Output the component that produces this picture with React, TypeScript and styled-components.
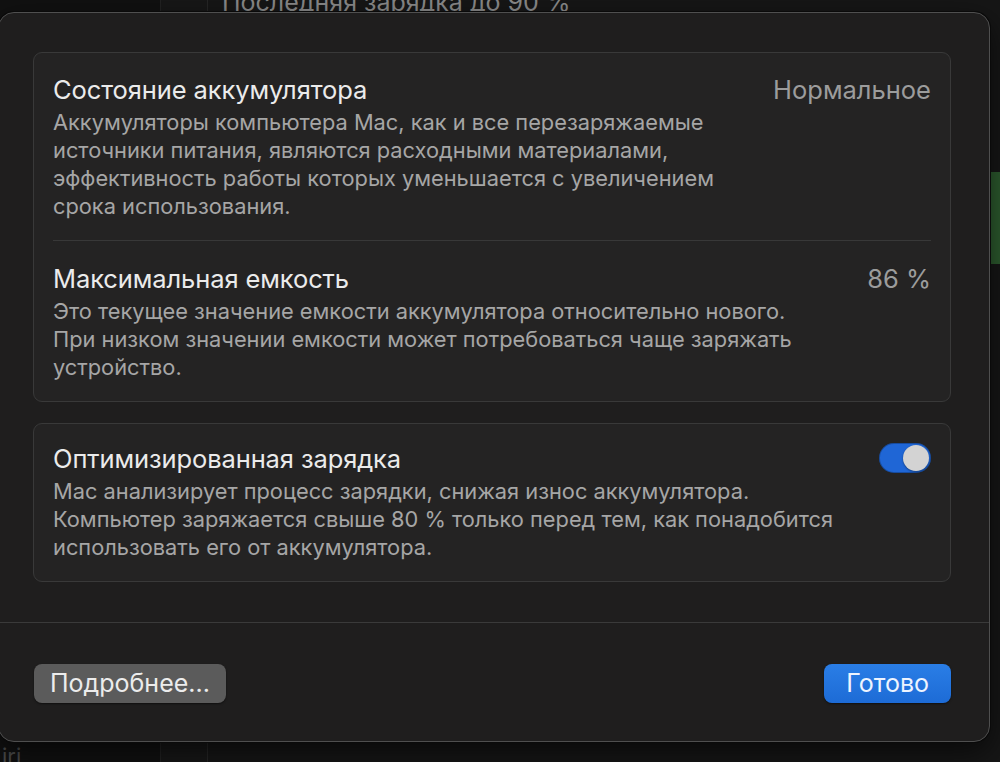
import React from 'react';
import styled, { createGlobalStyle } from 'styled-components';

const GlobalStyle = createGlobalStyle`
    html, body {
        margin: 0;
        padding: 0;
        background: #151515;
        font-family: Inter, "Noto Sans", sans-serif;
        -webkit-font-smoothing: antialiased;
    }
    #root {
        width: 1000px;
        height: 762px;
        overflow: hidden;
        position: relative;
    }
`;

const Backdrop = styled.div`
    display: flex;
    width: 1000px;
    height: 762px;
    background: #161616;
`;

const BackSidebar = styled.div`
    width: 160px;
    background: #111111;
    display: flex;
    flex-direction: column;
    justify-content: flex-end;
    padding: 0 0 0 2px;
    box-sizing: border-box;
`;

const BackSideLabel = styled.div`
    color: #4a4a4a;
    font-size: 22px;
    line-height: 20px;
    margin-bottom: -4px;
`;

const BackGutter = styled.div`
    width: 46px;
    background: #171717;
    border-left: 1px solid #222;
    border-right: 1px solid #262626;
`;

const BackContent = styled.div`
    flex: 1;
    display: flex;
    flex-direction: column;
    padding-left: 14px;
`;

const BackText = styled.div`
    color: #8a8a8a;
    font-size: 25px;
    line-height: 24px;
    margin-top: -10px;
    white-space: nowrap;
`;

const BackRightStripe = styled.div`
    margin-left: auto;
    margin-top: 158px;
    width: 10px;
    height: 92px;
    background: #2c5a2e;
`;

const Sheet = styled.div`
    position: absolute;
    left: -2px;
    top: 12px;
    width: 992px;
    height: 730px;
    box-sizing: border-box;
    background: #1f1e1e;
    border: 1px solid #4f4f4f;
    border-radius: 16px;
    box-shadow: 0 0 0 1px #0a0a0a, 0 10px 30px rgba(0, 0, 0, 0.6);
    display: flex;
    flex-direction: column;
`;

const SheetBody = styled.div`
    display: flex;
    flex-direction: column;
    gap: 21px;
    padding: 39px 38px 0 34px;
    height: 609px;
    box-sizing: border-box;
`;

const Card = styled.div`
    background: #242323;
    border: 1px solid #393939;
    border-radius: 9px;
    padding: 0 19px;
    display: flex;
    flex-direction: column;
`;

const Row = styled.div<{ $pt: number; $pb: number }>`
    display: flex;
    align-items: flex-start;
    gap: 20px;
    padding: ${p => p.$pt}px 0 ${p => p.$pb}px;
`;

const Separator = styled.div`
    height: 1px;
    background: #383838;
`;

const RowText = styled.div`
    flex: 1;
    display: flex;
    flex-direction: column;
    gap: 3px;
`;

const Title = styled.div`
    color: #ebebeb;
    font-size: 25.5px;
    line-height: 30px;
    letter-spacing: -0.1px;
    white-space: nowrap;
`;

const Description = styled.div`
    color: #a6a6a6;
    font-size: 21.8px;
    line-height: 28px;
    white-space: nowrap;
`;

const Value = styled.div`
    color: #9c9c9c;
    font-size: 25.5px;
    line-height: 30px;
    white-space: nowrap;
`;

const Toggle = styled.div<{ $on: boolean }>`
    width: 52px;
    height: 30px;
    border-radius: 15px;
    background: ${p => (p.$on ? '#1f66d6' : '#4a4a4a')};
    display: flex;
    align-items: center;
    justify-content: ${p => (p.$on ? 'flex-end' : 'flex-start')};
    padding: 0 2px;
    box-sizing: border-box;
    margin-top: -1px;
    box-shadow: inset 0 0 0 1px rgba(0, 0, 0, 0.25);
`;

const Knob = styled.div`
    width: 26px;
    height: 26px;
    border-radius: 50%;
    background: #d3d3d3;
    box-shadow: 0 1px 2px rgba(0, 0, 0, 0.4);
`;

const Divider = styled.div`
    height: 1px;
    background: #3a3a3a;
`;

const Footer = styled.div`
    flex: 1;
    display: flex;
    align-items: center;
    justify-content: space-between;
    padding: 0 38px 0 35px;
`;

const Button = styled.button<{ $primary?: boolean }>`
    height: 39px;
    padding: 0 ${p => (p.$primary ? 22 : 16)}px;
    border: none;
    border-radius: 8px;
    font-family: inherit;
    font-size: 25px;
    line-height: 39px;
    color: ${p => (p.$primary ? '#eef4ff' : '#ececec')};
    background: ${p => (p.$primary ? 'linear-gradient(#2a7ee6, #1d6bd6)' : '#5b5b5b')};
    box-shadow: 0 1px 2px rgba(0, 0, 0, 0.5);
    margin-top: 2px;
`;

interface SettingRowProps {
    title: string;
    lines: string[];
    aside: React.ReactNode;
    pt: number;
    pb: number;
}

const SettingRow: React.FC<SettingRowProps> = ({ title, lines, aside, pt, pb }) => (
    <Row $pt={pt} $pb={pb}>
        <RowText>
            <Title>{title}</Title>
            <Description>
                {lines.map((l, i) => (
                    <div key={i}>{l}</div>
                ))}
            </Description>
        </RowText>
        {aside}
    </Row>
);

const App: React.FC = () => {
    return (
        <>
            <GlobalStyle />
            <Backdrop>
                <BackSidebar>
                    <BackSideLabel>iri</BackSideLabel>
                </BackSidebar>
                <BackGutter />
                <BackContent>
                    <BackText>Последняя зарядка до 90 %</BackText>
                    <BackRightStripe />
                </BackContent>
            </Backdrop>
            <Sheet>
                <SheetBody>
                    <Card>
                        <SettingRow
                            title="Состояние аккумулятора"
                            lines={[
                                'Аккумуляторы компьютера Mac, как и все перезаряжаемые',
                                'источники питания, являются расходными материалами,',
                                'эффективность работы которых уменьшается с увеличением',
                                'срока использования.',
                            ]}
                            aside={<Value>Нормальное</Value>}
                            pt={22}
                            pb={20}
                        />
                        <Separator />
                        <SettingRow
                            title="Максимальная емкость"
                            lines={[
                                'Это текущее значение емкости аккумулятора относительно нового.',
                                'При низком значении емкости может потребоваться чаще заряжать',
                                'устройство.',
                            ]}
                            aside={<Value>86 %</Value>}
                            pt={23}
                            pb={20}
                        />
                    </Card>
                    <Card>
                        <SettingRow
                            title="Оптимизированная зарядка"
                            lines={[
                                'Mac анализирует процесс зарядки, снижая износ аккумулятора.',
                                'Компьютер заряжается свыше 80 % только перед тем, как понадобится',
                                'использовать его от аккумулятора.',
                            ]}
                            aside={
                                <Toggle $on>
                                    <Knob />
                                </Toggle>
                            }
                            pt={20}
                            pb={20}
                        />
                    </Card>
                </SheetBody>
                <Divider />
                <Footer>
                    <Button>Подробнее...</Button>
                    <Button $primary>Готово</Button>
                </Footer>
            </Sheet>
        </>
    );
};

export default App;
